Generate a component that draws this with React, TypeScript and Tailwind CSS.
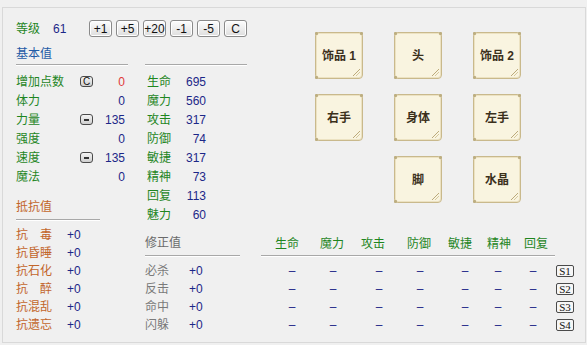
import React from "react";

const FONT = { fontFamily: '"Liberation Sans","Noto Sans CJK SC",sans-serif' };

function Btn({ t }: { t: string }) {
  return (
    <div className="flex h-[17px] w-[23px] items-center justify-center rounded-[3px] border border-[#8a8a8a] bg-gradient-to-b from-[#fdfdfd] to-[#dedede] text-[12px] leading-none text-[#111] shadow-[inset_0_0_0_1px_#ffffff]">
      {t}
    </div>
  );
}

function MiniIcon({ t }: { t: "C" | "-" }) {
  return (
    <div className="flex h-[11px] w-[13px] items-center justify-center rounded-[3px] border border-[#4a4a4a] bg-gradient-to-b from-[#f4f4f4] to-[#cfcfcf] text-[10px] leading-none text-[#111]">
      {t === "C" ? "C" : <div className="h-[2px] w-[5px] bg-[#333]" />}
    </div>
  );
}

function SBtn({ t }: { t: string }) {
  return (
    <div
      className="flex h-[12px] w-[18px] items-center justify-center rounded-[2px] border border-[#4a4a4a] bg-[#f6f6f6] text-[11px] leading-none text-[#111]"
      style={{ fontFamily: '"Liberation Serif",serif' }}
    >
      {t}
    </div>
  );
}

function Line({ w }: { w: string }) {
  return <div className={`${w} h-[2px] border-t border-[#a8a8a8] border-b border-b-[#ffffff]`} />;
}

function Slot({ t }: { t: string }) {
  return (
    <div className="relative flex h-[47px] w-[48px] items-center justify-center rounded-[4px] border border-[#c9b98c] bg-[#f9f4e0] shadow-[inset_0_0_0_1px_#ece2c2]">
      <span className="text-[12px] font-semibold leading-none text-[#3b301c]">{t}</span>
      <svg className="absolute bottom-[1px] right-[1px]" width="9" height="9" viewBox="0 0 9 9">
        <path d="M1 8 L8 1" stroke="#bba97a" strokeWidth="1" />
        <path d="M4 8 L8 4" stroke="#d6c89c" strokeWidth="1" />
      </svg>
      <div className="absolute left-[-1px] top-[-1px] h-[3px] w-[3px] rounded-[1px] bg-[#bdae80]" />
      <div className="absolute right-[-1px] top-[-1px] h-[3px] w-[3px] rounded-[1px] bg-[#bdae80]" />
      <div className="absolute bottom-[-1px] left-[-1px] h-[3px] w-[3px] rounded-[1px] bg-[#bdae80]" />
    </div>
  );
}

const GREEN = "text-[#1f861f]";
const NAVY = "text-[#1c2788]";
const ORANGE = "text-[#c2652a]";
const GRAY = "text-[#7a7a7a]";

const leftStats: { l: string; icon?: "C" | "-"; v: string; red?: boolean }[] = [
  { l: "增加点数", icon: "C", v: "0", red: true },
  { l: "体力", v: "0" },
  { l: "力量", icon: "-", v: "135" },
  { l: "强度", v: "0" },
  { l: "速度", icon: "-", v: "135" },
  { l: "魔法", v: "0" },
];

const midStats = [
  ["生命", "695"],
  ["魔力", "560"],
  ["攻击", "317"],
  ["防御", "74"],
  ["敏捷", "317"],
  ["精神", "73"],
  ["回复", "113"],
  ["魅力", "60"],
];

const resist = ["抗　毒", "抗昏睡", "抗石化", "抗　醉", "抗混乱", "抗遗忘"];
const mods = ["必杀", "反击", "命中", "闪躲"];

const headers = [
  { t: "生命", w: "w-[45px]" },
  { t: "魔力", w: "w-[41px]" },
  { t: "攻击", w: "w-[46px]" },
  { t: "防御", w: "w-[41px]" },
  { t: "敏捷", w: "w-[39px]" },
  { t: "精神", w: "w-[37px]" },
  { t: "回复", w: "w-[24px]" },
];

const dashMl = ["ml-[21px]", "ml-[21px]", "ml-[26px]", "ml-[21px]", "ml-[25px]", "ml-[13px]", "ml-[15px]"];

export default function App() {
  return (
    <div className="h-[345px] w-[587px] overflow-hidden bg-[#f0f0f0] pt-[7px] pl-[2px]" style={FONT}>
      <div className="flex h-[336px] w-[584px] border border-[#d9d9d9] bg-[#f0f0f0]">
        {/* Left block */}
        <div className="flex w-[255px] flex-col pl-[13px] pt-[12px]">
          <div className="flex h-[17px] items-center text-[12px]">
            <span className={`w-[37px] leading-none ${GREEN}`}>等级</span>
            <span className={`w-[36px] leading-none ${NAVY}`}>61</span>
            <div className="flex gap-[4px]">
              {["+1", "+5", "+20", "-1", "-5", "C"].map((b) => (
                <Btn key={b} t={b} />
              ))}
            </div>
          </div>
          <div className="flex gap-[17px]">
            {/* Col L */}
            <div className="flex w-[112px] flex-col text-[12px]">
              <div className="mt-[8px] flex h-[18px] items-center text-[#1f5ba6]">基本值</div>
              <div className="mt-[1px]">
                <Line w="w-[112px]" />
              </div>
              <div className="mt-[6px] flex flex-col">
                {leftStats.map((s) => (
                  <div key={s.l} className="flex h-[19px] items-center">
                    <span className={`w-[64px] ${GREEN}`}>{s.l}</span>
                    <div className="w-[13px]">{s.icon && <MiniIcon t={s.icon} />}</div>
                    <span className={`flex-1 pr-[3px] text-right ${s.red ? "text-[#e03a3a]" : NAVY}`}>{s.v}</span>
                  </div>
                ))}
              </div>
              <div className={`mt-[12px] flex h-[18px] items-center ${ORANGE}`}>抵抗值</div>
              <div className="mt-[3px]">
                <Line w="w-[84px]" />
              </div>
              <div className="mt-[5px] flex flex-col">
                {resist.map((r) => (
                  <div key={r} className="flex h-[18px] items-center">
                    <span className={`w-[51px] ${ORANGE}`}>{r}</span>
                    <span className={NAVY}>+0</span>
                  </div>
                ))}
              </div>
            </div>
            {/* Col M */}
            <div className="flex w-[102px] flex-col text-[12px]">
              <div className="mt-[8px] h-[18px]" />
              <div className="mt-[1px]">
                <Line w="w-[102px]" />
              </div>
              <div className="mt-[6px] flex flex-col">
                {midStats.map(([l, v]) => (
                  <div key={l} className="flex h-[19px] items-center pl-[2px]">
                    <span className={`w-[33px] ${GREEN}`}>{l}</span>
                    <span className={`w-[26px] text-right ${NAVY}`}>{v}</span>
                  </div>
                ))}
              </div>
              <div className="mt-[10px] flex h-[18px] items-center text-[#6a6a6a]">修正值</div>
              <div className="mt-[3px]">
                <Line w="w-[95px]" />
              </div>
              <div className="mt-[5px] flex flex-col">
                {mods.map((m) => (
                  <div key={m} className="flex h-[18px] items-center">
                    <span className={`w-[44px] ${GRAY}`}>{m}</span>
                    <span className={NAVY}>+0</span>
                  </div>
                ))}
              </div>
            </div>
          </div>
        </div>
        {/* Right block */}
        <div className="flex flex-1 flex-col pt-[24px]">
          <div className="ml-[57px] grid grid-cols-[48px_48px_48px] gap-x-[31px] gap-y-[15px]">
            <Slot t="饰品 1" />
            <Slot t="头" />
            <Slot t="饰品 2" />
            <Slot t="右手" />
            <Slot t="身体" />
            <Slot t="左手" />
            <div />
            <Slot t="脚" />
            <Slot t="水晶" />
          </div>
          <div className="ml-[3px] mt-[32px] text-[12px]">
            <div className="flex h-[18px] w-[294px] items-center pl-[14px]">
              {headers.map((h) => (
                <span key={h.t} className={`${h.w} ${GREEN}`}>
                  {h.t}
                </span>
              ))}
            </div>
            <div className="mt-[2px]">
              <Line w="w-[294px]" />
            </div>
            <div className="mt-[5px] flex flex-col">
              {["S1", "S2", "S3", "S4"].map((s) => (
                <div key={s} className="flex h-[18px] items-center">
                  {dashMl.map((ml, i) => (
                    <span key={i} className={`${ml} w-[20px] text-center ${NAVY}`}>
                      –
                    </span>
                  ))}
                  <div className="ml-[13px]">
                    <SBtn t={s} />
                  </div>
                </div>
              ))}
            </div>
          </div>
        </div>
      </div>
    </div>
  );
}
